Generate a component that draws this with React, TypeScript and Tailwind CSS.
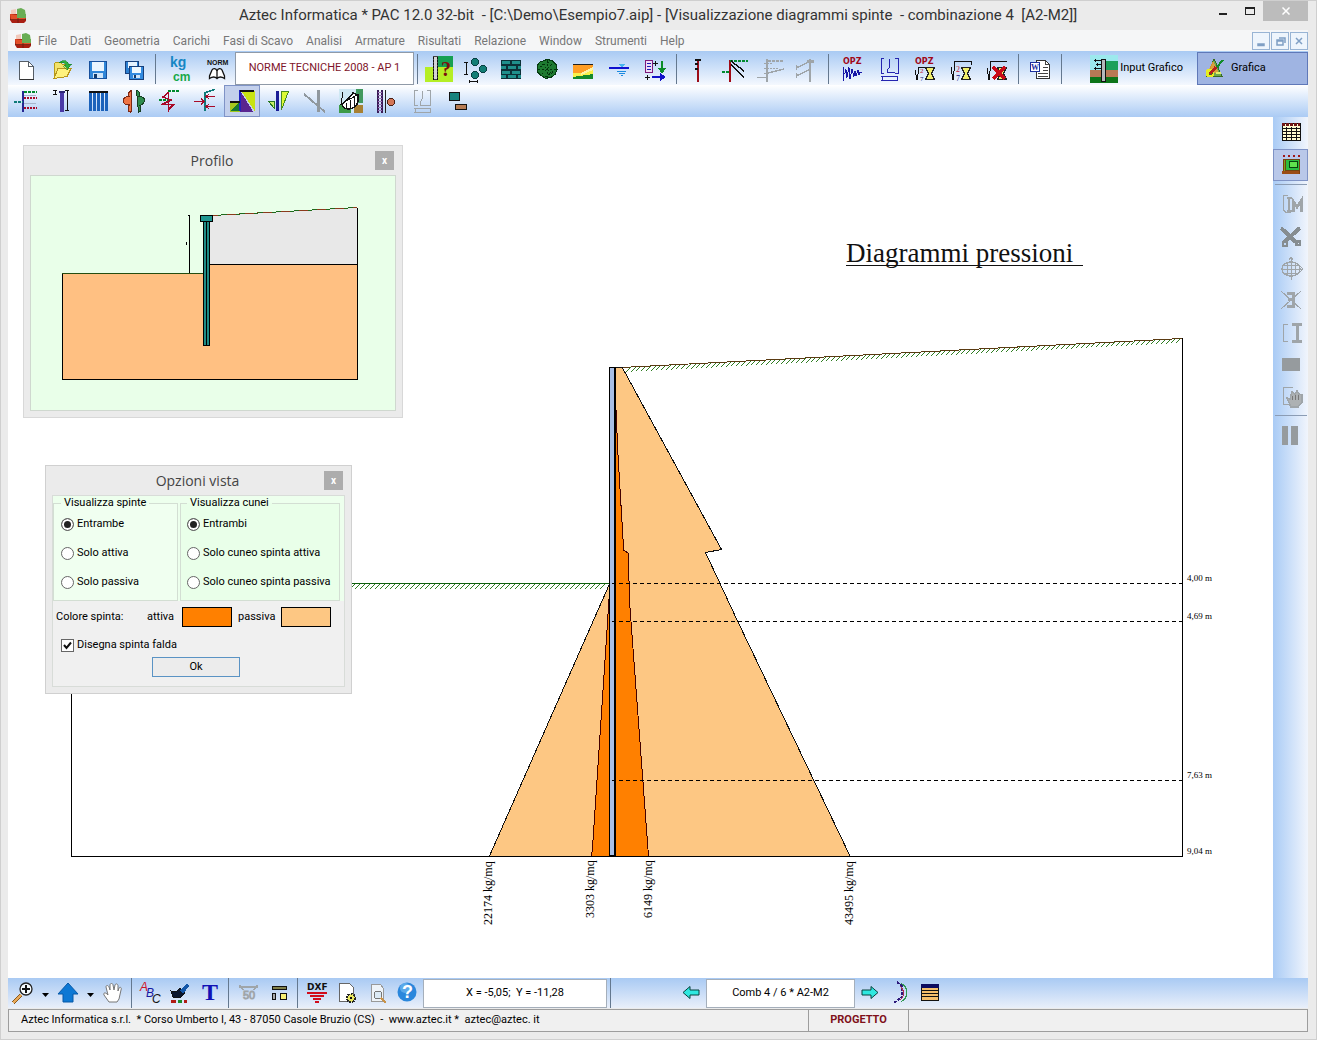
import React from "react";

type Kids = { children: React.ReactNode };

const Ico = ({ children }: Kids) => (
  <svg viewBox="0 0 28 28" className="h-7 w-7 shrink-0" fill="none" shapeRendering="crispEdges" aria-hidden="true">
    {children}
  </svg>
);

const G = "#008a2e";
const R = "#a80a28";
const N = "#15157a";
const T = "#0f7a78";
const A = "#9fa5a9";

const groupA: [string, React.ReactNode][] = [
  ["Nuovo", <>
    <path d="M7.500 6.500h9l5 5v12.500h-14z" fill="#fff" stroke="#555d66" />
    <path d="M16.500 6.500v5h5" stroke="#555d66" />
    <path d="M8 24.500h14" stroke="#333" /></>],
  ["Apri", <>
    <path d="M6 23V9l2-2h4l2 2h5v4" fill="#f3e36a" stroke="#b79a18" />
    <path d="M6 23.500l4-10h13l-4 8z" fill="#fff27d" stroke="#b8961c" />
    <path d="M11 7.500c4-3 9-2 10 2l2.500-.5-4 5.500-4-4 2.500-.5c-1-2-3-2.500-7-2.500z" fill="#2fae3c" stroke="#15802a" strokeWidth=".6" /></>],
  ["Salva", <>
    <rect x="5.500" y="6.500" width="17" height="17" fill="#2f86d8" stroke="#17509c" />
    <rect x="8" y="7" width="12" height="9" fill="#e9f5ff" />
    <rect x="9" y="18" width="10" height="5" fill="#cfe5fa" />
    <rect x="10" y="19" width="3" height="4" fill="#123a6b" /></>],
  ["Salva tutto", <>
    <path d="M5.500 6.500h13v12h-13z" fill="#2b7ed0" stroke="#17407c" />
    <path d="M8 7h9v6H8z" fill="#e6f3ff" />
    <path d="M9.500 11.500h13.500v12.500H9.500z" fill="#338be0" stroke="#17407c" />
    <path d="M12 12h9v6h-9z" fill="#eef8ff" />
    <path d="M13 20h7v3h-7z" fill="#cfe5fa" />
    <path d="M14 20h2v3h-2z" fill="#123a6b" /></>],
];

const groupUnits: [string, React.ReactNode][] = [
  ["Unità di misura", <>
    <text x="3" y="12" fontSize="14" fontWeight="700" fontFamily="Liberation Sans, sans-serif" fill="#1687c4">kg</text>
    <text x="6" y="26" fontSize="12" fontWeight="700" fontFamily="Liberation Sans, sans-serif" fill="#18a848">cm</text></>],
  ["Norme", <>
    <text x="4" y="10" fontSize="7" fontWeight="700" fontFamily="Liberation Sans, sans-serif" fill="#111">NORM</text>
    <path d="M14 23v-7c-1-3-4-3-5-1L6.500 21v2.500c3-2 6-1.500 7.500 0 1.500-1.500 4.500-2 7.500 0V21L19 15c-1-2-4-2-5 1" fill="#fff" stroke="#111" strokeWidth="1.300" shapeRendering="auto" /></>],
];

const groupB: [string, React.ReactNode][] = [
  ["Guida paratia", <>
    <path d="M0 12h28v15H0z" fill="#b5ee25" /><path d="M8 1h20v11H8z" fill="#16a052" />
    <path d="M8.500 1.500h4v23h-4z" fill="#d5d5d5" stroke="#444" /><path d="M8.500 2v23M12.500 2v23" stroke="#111" strokeDasharray="2 1" />
    <text x="16" y="21" fontSize="20" fontWeight="700" fontFamily="Liberation Serif, serif" fill="#7c1010">?</text></>],
  ["Pali", <>
    <path d="M3 7.500h4M5 7.500v12M3 19.500h4M8 26.500h8M8.500 25v3M16.500 25v3" stroke="#111" />
    <g fill="#127d75" stroke="#093f42"><circle cx="14" cy="7" r="3.500" /><circle cx="22" cy="14" r="3.500" /><circle cx="14" cy="20" r="3.500" /></g></>],
  ["Materiali", <>
    <path d="M4 5h20v19H4z" fill="#0c3038" />
    <path d="M5 6h8v3H5zM15 6h8v3h-8zM4 11h5v3H4zM11 11h8v3h-8zM21 11h3v3h-3zM5 16h8v3H5zM15 16h8v3h-8zM4 20h5v3H4zM11 20h8v3h-8zM21 20h3v3h-3z" fill="#1f8f8c" /></>],
  ["Terreni", <>
    <path d="M14 4.500l5 1 4 4 1 5-2 5-4 3-5 1-5-3-4-4V11l3-4z" fill="#1d7a30" stroke="#053a10" />
    <path d="M9 9l10 10M9 19L19 9M14 5v18M5 14h18M7 12l9-5M12 22l9-6" stroke="#02330c" strokeDasharray="2 2" /></>],
  ["Stratigrafia", <>
    <path d="M4 9h20v15H4z" fill="#f8f04a" /><path d="M4 9h20v3L12 18H4z" fill="#ff9d24" /><path d="M4 22l20-3v5H4z" fill="#168a2a" />
    <path d="M12 18l12-6v3l-12 5z" fill="#fff3a5" /><path d="M4 9.500h20" stroke="#222" /></>],
  ["Falda", <>
    <path d="M4 13h20" stroke="#1010cf" strokeWidth="2" /><path d="M13 8.500h8l-4 4z" fill="#48b6ef" />
    <path d="M12 16.500h9M14 18.500h6M16 20.500h2" stroke="#1c8be0" /></>],
  ["Combinazioni", <>
    <path d="M4.500 5.500h7v12h-7z" fill="#efdcf7" stroke="#7c1a7a" /><path d="M6 8.500h4M6 11.500h4M6 14.500h4" stroke="#1b1bb5" />
    <path d="M12 8.500h5M14.500 6v5M4 22.500h5M6.500 20v5" stroke="#111" />
    <path d="M21 6v10M18 13l3 4 3-4" stroke="#0b8c28" strokeWidth="2" /><path d="M11 22h11M19 19l4 3-4 3" stroke="#1111c8" strokeWidth="2" /></>],
];

const groupC: [string, React.ReactNode][] = [
  ["Paratia", <><path d="M14 6v21" stroke="#9c0c18" strokeWidth="2" /><path d="M11 5h6M11 9h3M11 14h3" stroke="#111" strokeWidth="2" /></>],
  ["Tiranti", <><path d="M10 5v22" stroke="#a10a16" strokeWidth="2" /><path d="M10 6h18" stroke={G} strokeWidth="2" strokeDasharray="3 1" /><path d="M2 17h7" stroke={G} strokeWidth="2" strokeDasharray="3 1" /><path d="M11 6l13 10M11 10l13 12" stroke="#111" strokeWidth="1.500" /></>],
  ["Vincoli", <g stroke={A}><path d="M11 4v23" strokeWidth="2" /><path d="M1 22.500h10M12 18l16-4" strokeWidth="1.500" /><path d="M12 6h16" strokeWidth="2" strokeDasharray="3 1" /><path d="M8 8.500h9M8 13.500h14M8 18.500h3" strokeDasharray="2 1" /></g>],
  ["Carichi", <g stroke={A}><path d="M18 4v23" strokeWidth="2" /><path d="M15 6h7" strokeWidth="3" /><path d="M4 13l15-7M4 21l15-7M4.500 10v5M4.500 18v5" strokeWidth="1.500" /></g>],
];

const Opz = () => (
  <text x="4" y="9" fontSize="8" fontWeight="700" fontFamily="DejaVu Sans, sans-serif" fill="#a00718">OPZ</text>
);
const Hourglass = () => (
  <path d="M14.500 12.500h9l-3 6 3 6h-9l3-6z" fill="#f1ef6c" stroke="#222" />
);

const groupD: [string, React.ReactNode][] = [
  ["Opzioni sisma", <><Opz /><path d="M4.500 12v14M4 18.500h2l1-4 1 8 2-10 1 11 2-9 2 7 1-5 1 4 2-5 1 4 1-2h2" stroke="#1717a8" /></>],
  ["Armature", <g stroke="#2525b0"><path d="M9 3.500H6.500v15H9M20 3.500h3v15h-3M14.500 3.500v9l-2 2v3h7M6 21.500h17M7 22v3M22 22v3M6 25.500h17" /></g>],
  ["Opzioni analisi", <><Opz /><path d="M4 15l2 10 2-12.500h15" stroke="#111" /><text x="9" y="18" fontSize="7" fontFamily="Liberation Serif, serif" fill="#c01832">2</text><text x="9" y="26" fontSize="7" fontFamily="Liberation Serif, serif" fill={N}>7</text><Hourglass /></>],
  ["Analisi", <><path d="M4 12l2 13L8 6.500h16V10" stroke="#111" /><text x="9" y="17" fontSize="8" fontFamily="Liberation Serif, serif" fill="#c01832">2</text><text x="9" y="26" fontSize="8" fontFamily="Liberation Serif, serif" fill={N}>7</text><Hourglass /></>],
  ["Annulla analisi", <><path d="M4 13l2 12L8 6.500h16" stroke="#111" /><Hourglass /><path d="M10 12l12 12M22 12L10 24" stroke="#c90a18" strokeWidth="4" /></>],
];

const rowTwo: [string, React.ReactNode][] = [
  ["Spinte", <><path d="M11 4v21" stroke="#272792" strokeWidth="2" /><path d="M12 5h13" stroke={G} strokeWidth="2" strokeDasharray="3 1" /><path d="M12 11h13M12 21h13" stroke={R} strokeWidth="2" strokeDasharray="2 1" /><path d="M12 8.500h12M12 16.500h12" stroke="#a7b5cc" /><path d="M2 15h9" stroke={T} strokeWidth="2" strokeDasharray="3 1" /></>],
  ["Altezza", <><path d="M5 3.500h4M7.500 3.500v4M5 7.500h4M17 3.500h4M19.500 3.500v20M17 23.500h4" stroke="#111" /><path d="M14 5v20" stroke="#4a3aa6" strokeWidth="4" /><path d="M11 5h6" stroke="#2e2774" strokeWidth="2" /></>],
  ["Pannelli", <><path d="M5 5h19" stroke="#111" strokeWidth="2" /><path d="M6.500 6v18M10.500 6v18M14.500 6v18M18.500 6v18M22.500 6v18" stroke="#1b62bb" strokeWidth="3" /></>],
  ["Momenti", <><path d="M11.500 3.500v9c0 4 1 11-1 13-3-1-3-5-1-8-4 1-6-1-6-4s3-4 6-4c-2-2-1-5 2-6z" fill="#ee7445" stroke="#7d2712" /><path d="M16.500 3.500c4 1 4 4 2 6 4 0 6 2 6 4s-2 4-5 5c2 2 2 6-1 7z" fill="#2f8c4f" stroke="#173f21" /></>],
  ["Taglio", <><path d="M12 4h11" stroke={G} strokeWidth="2" strokeDasharray="3 1" /><path d="M12.500 5v20M12 6l-5 4 8 3-8 4 10 1-5 5" stroke={R} strokeWidth="1.500" /><path d="M3 13h9" stroke={G} strokeWidth="2" strokeDasharray="3 1" /></>],
  ["Sforzi", <><path d="M13 5v19M13 5.500l10-3" stroke={T} strokeWidth="1.500" /><path d="M2 14.500h10M9 11.500l3 3-3 3M23 9.500h-9M17 7l-3 2.500 3 2.500M23 19.500h-9M17 17l-3 2.500 3 2.500" stroke={R} /></>],
  ["Diagrammi spinte", <><path d="M13 3.500h14v21z" fill="#c8e312" /><path d="M12 3.500l13 21H12z" fill="#5a2590" /><path d="M2 14.500h10v10H2z" fill="#a4c81e" /><path d="M2 24l10-9v9z" fill="#167a32" /><path d="M12 3v21" stroke="#2024c0" strokeWidth="2" /><path d="M2 14.500h10M12 4h14" stroke="#111" strokeWidth="2" /></>],
  ["Cunei", <><path d="M4.500 14.500h6v7z" fill="#c8ee68" stroke="#287720" /><path d="M13 4v20" stroke="#1a1d96" strokeWidth="3" /><path d="M17.500 4.500h7l-7 18z" fill="#dcfa35" stroke="#498b20" /></>],
  ["Spostamenti", <g stroke="#90989e"><path d="M4 7l21 18" strokeWidth="2" /><path d="M18.500 3v22" strokeWidth="3" /></g>],
  ["Stabilità", <><path d="M3 2h24v24H3z" fill="#cfe8f3" /><path d="M20 2h7v14h-7z" fill="#41995f" /><path d="M18 18h9v8h-9z" fill="#a88032" /><path d="M3 18h12v8H3z" fill="#3d9b49" /><path d="M6 17c0 7 14 7 16-3V8l-5-2-4 5z" fill="#fff" stroke="#111" strokeWidth="1.500" /><path d="M7 5l-2 12 16-9M10 16v6M14 13v9M18 10v11" stroke="#111" /></>],
  ["Sezione palo", <><path d="M6 3v23M10 3v23" stroke="#3a1b58" strokeWidth="2" /><path d="M6 5.500h4M6 8.500h4M6 11.500h4M6 14.500h4M6 17.500h4M6 20.500h4M6 23.500h4" stroke="#9b75b6" /><path d="M13 3v23" stroke="#222" /><circle cx="19" cy="15" r="3.500" fill="#d37657" stroke="#492015" /></>],
  ["Armatura palo", <g stroke={A}><path d="M9.500 3.500h-3v15h3M19 3.500h3v15h-3M14.500 3.500v8l-2 3v4h6M6 21.500h17M7 22v3M22 22v3M6 25.500h17" /></g>],
  ["Cordoli", <><path d="M5.500 5.500h10v8h-10z" fill="#16837e" stroke="#111" /><path d="M11.500 17.500h11v5h-11z" fill="#b67c55" stroke="#111" /></>],
];

const sideIcons: [string, React.ReactNode][] = [
  ["Modifica", <g stroke={A}><path d="M11 5.500H6.500v15l3 2H14" strokeWidth="1.500" /><path d="M12 8v13M10 8h5M10 21h6" strokeWidth="2" /><path d="M16 22V11l4 6 4-6v11" strokeWidth="3" /></g>],
  ["Taglia", <g stroke="#868d91"><path d="M4 6l17 16M23 6L7 20" strokeWidth="4" /><circle cx="8" cy="22" r="2.500" strokeWidth="2" /><circle cx="21" cy="21" r="2.500" strokeWidth="2" /></g>],
  ["Sposta", <g stroke={A}><ellipse cx="14" cy="15" rx="9" ry="7" strokeWidth="1.500" /><path d="M14.500 3v23M4 15.500h22M12 6l2-3 2 3M23 12l3 3-3 3M7 11.500h14M7 19.500h14M10.500 9v12M18.500 9v12" /></g>],
  ["Elimina", <g stroke={A}><path d="M4 5l20 18M24 5L4 23" /><path d="M10 7h6v13h-6M11 13.500h5" strokeWidth="3" /></g>],
  ["Quota", <g stroke={A}><path d="M11 6.500H6.500v17H11" /><path d="M15 6.500h10M15 23.500h10M20.500 6v17" strokeWidth="3" /></g>],
  ["Riempi", <path d="M5 8h18v13H5z" fill="#969b9e" />],
  ["Trascina", <g stroke={A}><path d="M16 5.500H6.500v17H13" /><path d="M10 16l3 1 2-7 3 2 2-3 2 3 3 1v7l-4 5h-7z" fill="#adb1b3" strokeWidth="1.500" /><path d="M15.500 14v4M18.500 13v5M21.500 13v5" stroke="#777" /></g>],
];

const Logo = () => (
  <svg viewBox="0 0 16 16" className="h-4 w-4 shrink-0" aria-hidden="true">
    <path d="M7 1l4-1 4 2 1 7-6 1-3-2z" fill="#69ad54" />
    <path d="M1 2l5-1v5H1z" fill="#f1c9bb" />
    <path d="M0 6h16v7l-2 2H2l-2-3z" fill="#a91f12" />
    <path d="M0 6l7 1 9 3v-1l-1 3H1z" fill="#e35029" />
    <path d="M7 6v4h9V6z" fill="#69ad54" />
    <path d="M0 11.500h16M8 10v5" stroke="#5c180f" strokeWidth=".7" />
  </svg>
);

const ToolBtn = ({ label, children, on = false }: Kids & { label: string; on?: boolean }) => (
  <button
    type="button"
    aria-label={label}
    className={
      on
        ? "flex h-8 w-9 shrink-0 items-center justify-center border border-[#7f93c6] bg-[#c3d0ec]"
        : "flex h-8 w-9 shrink-0 items-center justify-center"
    }
  >
    <Ico>{children}</Ico>
  </button>
);

const SmallBtn = ({ label, children }: Kids & { label: string }) => (
  <button type="button" aria-label={label} className="flex h-7 w-[30px] shrink-0 items-center justify-center">
    <Ico>{children}</Ico>
  </button>
);

const Drop = ({ label }: { label: string }) => (
  <button type="button" aria-label={label} className="flex h-7 w-[15px] shrink-0 items-center justify-center pt-1">
    <svg viewBox="0 0 7 4" className="h-1 w-[7px]" aria-hidden="true"><path d="M0 0h7L3.500 4z" fill="#000" /></svg>
  </button>
);

const Sep = () => <span className="mx-[3px] h-[30px] w-px shrink-0 bg-[#64788f]" />;

const hatch = (x0: number, y0: number, x1: number, y1: number) => {
  let d = "";
  for (let x = x0; x <= x1; x += 5) {
    const y = Math.round(y0 + ((y1 - y0) * (x - x0)) / (x1 - x0));
    d += `M${x} ${y}l-5 5`;
  }
  return d;
};

const depths: [string, number][] = [["4,00 m", 583], ["4,69 m", 621], ["7,63 m", 780], ["9,04 m", 856]];
const loads: [string, number, number][] = [["22174 kg/mq", 492, 925], ["3303 kg/mq", 594, 918], ["6149 kg/mq", 652, 918], ["43495 kg/mq", 853, 925]];

const PressureChart = () => (
  <svg viewBox="8 117 1265 861" preserveAspectRatio="xMinYMin meet" shapeRendering="crispEdges" className="block h-full w-full" role="img" aria-label="Diagrammi pressioni">
    <text x="846" y="262" fontSize="27" fontFamily="Liberation Serif, serif" fill="#111">Diagrammi pressioni</text>
    <path d="M846 265.500h237" stroke="#111" />
    <path d={hatch(631, 367, 1181, 338)} stroke="#2f7d22" />
    <path d={hatch(330, 584, 609, 584)} stroke="#2f7d22" />
    <path d="M621 367.500L1182 338.500" stroke="#5a3a12" />
    <path d="M330 583.500H610" stroke="#0d5f0d" />
    <path d="M609.500 584L489.500 856H610z" fill="#fdc783" stroke="#111" />
    <path d="M609.500 592L605 660 592.500 848 591.500 856H610z" fill="#ff8000" stroke="#400" />
    <path d="M616 367h6L721.500 549.500 705.500 552.500 738 622 850 856H616z" fill="#fdc783" />
    <path d="M616 367h6L721.500 549.500 705.500 552.500 738 622 850 856" fill="none" stroke="#111" />
    <path d="M616 410l2 45 5.500 92v3l4.500 3 2 55 18.500 248H616z" fill="#ff8000" />
    <path d="M616 410l2 45 5.500 92v3l4.500 3 2 55 18.500 248" fill="none" stroke="#400" />
    <path d="M71.500 690V856.500H1182.500V338" stroke="#000" fill="none" />
    <path d="M609 367h7v490h-7z" fill="#000" />
    <path d="M610 368h4v487h-4z" fill="#a9bfe6" />
    <path d="M612 583.500H1182M612 621.500H1182M612 780.500H1182" stroke="#000" strokeDasharray="4 3" />
    <g fontFamily="Liberation Serif, serif" fill="#000">
      {depths.map(([t, y]) => <text key={t} x="1187" y={y - 2} fontSize="9">{t}</text>)}
      {loads.map(([t, x, y]) => <text key={t} transform={`translate(${x} ${y}) rotate(-90)`} fontSize="12">{t}</text>)}
    </g>
  </svg>
);

const ProfileDrawing = () => (
  <svg viewBox="31 176 364 234" shapeRendering="crispEdges" className="block w-full" role="img" aria-label="Profilo paratia">
    <path d="M208 216L357.500 208V264.500H208z" fill="#e8e8e8" />
    <path d="M62.500 273.500H208V264.500H357.500V379.500H62.500z" fill="#ffc082" />
    <path d="M62.500 273.500V379.500H357.500V208M209 264.500H357.500" stroke="#000" fill="none" />
    <path d="M62 273.500H204" stroke="#244d10" />
    <path d="M212 215.500L357.500 207.500" stroke="#8b3a1c" />
    <path d="M218 215.200L357.500 207.500" stroke="#1f6a1c" strokeDasharray="9 9" />
    <path d="M188 215.500h2M189.500 215v58M186.500 242v3" stroke="#000" />
    <path d="M203.500 221.500h6v124h-6z" fill="#1e8b84" stroke="#000" />
    <path d="M206.500 221v124" stroke="#000" />
    <path d="M200.500 215.500h12v6h-12z" fill="#1e9690" stroke="#000" />
  </svg>
);

const Choice = ({ group, label, on = false }: { group: string; label: string; on?: boolean }) => (
  <label className="flex h-[29px] items-center gap-[3px] whitespace-nowrap">
    <input type="radio" name={group} defaultChecked={on} className="h-[13px] w-[13px] shrink-0 appearance-none rounded-full border border-[#666] bg-white checked:bg-[#222] checked:shadow-[inset_0_0_0_2px_white]" />
    {label}
  </label>
);

const FloatTitle = ({ title }: { title: string }) => (
  <header className="grid h-[29px] grid-cols-[1fr_auto_1fr] items-center pr-[2px]">
    <span />
    <h2 className="font-[Open_Sans,sans-serif] text-sm text-[#444]">{title}</h2>
    <button type="button" aria-label={`Chiudi ${title}`} className="flex h-[19px] w-[19px] items-center justify-center justify-self-end bg-[#adadad] text-[10px] font-bold text-white">x</button>
  </header>
);

const menus = ["File", "Dati", "Geometria", "Carichi", "Fasi di Scavo", "Analisi", "Armature", "Risultati", "Relazione", "Window", "Strumenti", "Help"];

export default function App() {
  return (
    <div className="flex min-h-screen flex-col border border-[#cfcfcf] bg-[#ebebeb] pr-2 pb-[7px] pl-[7px] font-[Roboto,sans-serif] text-[11px] text-black">
      <header className="grid h-[29px] grid-cols-[1fr_auto_1fr]">
        <span className="flex items-center pl-[2px]"><Logo /></span>
        <h1 className="self-center whitespace-pre text-[15px] text-[#333]">
          {"Aztec Informatica * PAC 12.0 32-bit  - [C:\\Demo\\Esempio7.aip] - [Visualizzazione diagrammi spinte  - combinazione 4  [A2-M2]]"}
        </h1>
        <div className="flex h-5 justify-self-end">
          <button type="button" aria-label="Riduci" className="flex w-[27px] items-center justify-center"><span className="mt-[5px] h-[2px] w-2 bg-[#222]" /></button>
          <button type="button" aria-label="Ingrandisci" className="flex w-[27px] items-center justify-center"><span className="h-2 w-[10px] border border-t-2 border-[#222]" /></button>
          <button type="button" aria-label="Chiudi" className="flex w-[45px] items-center justify-center bg-[#bcbcbc]">
            <svg viewBox="0 0 8 8" className="h-2 w-2" aria-hidden="true"><path d="M.5.500l7 7M7.500.500l-7 7" stroke="#fff" strokeWidth="1.500" /></svg>
          </button>
        </div>
      </header>

      <nav className="flex h-[21px] items-center bg-[#f5f6f7] pl-[7px] text-xs text-[#777]">
        <Logo />
        <div className="flex flex-1 items-center gap-[13px] pl-[7px]">
          {menus.map((m) => <button key={m} type="button" className="whitespace-nowrap">{m}</button>)}
        </div>
        <div className="flex gap-px text-[#7f9fc4]">
          {["M5 11h6v1.500H5z", "M5 7h6v5H5zM7 5h6v5M5 8h6", "M5 5l6 6M11 5l-6 6"].map((d, i) => (
            <button key={d} type="button" aria-label={["Riduci documento", "Ripristina documento", "Chiudi documento"][i]} className="h-[18px] w-[18px] border border-[#98b4d4] bg-[#eef5fc]">
              <svg viewBox="0 0 16 16" className="h-4 w-4" fill="none" stroke="currentColor" strokeWidth="1.500" aria-hidden="true"><path d={d} /></svg>
            </button>
          ))}
        </div>
      </nav>

      <div role="toolbar" aria-label="Principale" className="flex h-[34px] items-center bg-linear-to-b from-[#a9caf3] to-[#f4f8fe] pt-px">
        {groupA.map(([k, i]) => <ToolBtn key={k} label={k}>{i}</ToolBtn>)}
        <Sep /><span className="w-1" />
        {groupUnits.map(([k, i]) => <ToolBtn key={k} label={k}>{i}</ToolBtn>)}
        <output className="flex h-full w-[179px] shrink-0 items-center justify-center border border-[#8f9aa8] bg-white text-[#80142a]">NORME TECNICHE 2008 - AP 1</output>
        <Sep />
        {groupB.map(([k, i]) => <ToolBtn key={k} label={k}>{i}</ToolBtn>)}
        <Sep />
        {groupC.map(([k, i]) => <ToolBtn key={k} label={k}>{i}</ToolBtn>)}
        <span className="w-px" /><Sep /><span className="w-[3px]" />
        {groupD.map(([k, i]) => <ToolBtn key={k} label={k}>{i}</ToolBtn>)}
        <Sep />
        <ToolBtn label="Word">
          <path d="M10.500 5.500h9l4 4v14h-13z" fill="#fff" stroke="#333" /><path d="M19.500 5.500v4h4M17 12.500h5M17 15.500h5M12 18.500h10M12 21.500h10" stroke="#444" />
          <path d="M4.500 7.500h9v9h-9z" fill="#fff" stroke="#1c2f9e" />
          <text x="5" y="15" fontSize="8" fontWeight="700" fontFamily="Liberation Serif, serif" fill="#1c2f9e">W</text>
        </ToolBtn>
        <Sep />
        <div className="flex flex-1 items-stretch justify-end gap-[14px] self-stretch">
          <button type="button" className="flex items-center gap-[2px] whitespace-nowrap">
            <Ico>
              <path d="M0 0h28v16H0z" fill="#9ce9ed" /><path d="M14 6h14v10H14z" fill="#1ba05a" /><path d="M0 15h28v7H0z" fill="#b87955" /><path d="M0 22h28v6H0z" fill="#0d7519" />
              <path d="M11.500 4.500h4v22h-4z" fill="#b3b9bb" stroke="#111" /><path d="M4 5.500h7M6 9.500h5M4 13.500h7M5.500 4v3M7.500 8v3M5.500 12v3" stroke="#111" />
            </Ico>
            Input Grafico
          </button>
          <button type="button" className="flex w-[111px] items-center gap-[2px] border border-[#5f78b8] bg-[#9fb4e2] pl-[3px]">
            <Ico>
              <path d="M13 4l8 17H6z" fill="#6da850" stroke="#376c21" /><path d="M12 6l6 12H6z" fill="#f39e38" opacity=".8" />
              <circle cx="9" cy="18" r="4.500" fill="#e8ed22" /><path d="M22 5L9 20" stroke="#128b2a" strokeWidth="2" /><path d="M15 12l-6 7" stroke="#b5201c" strokeWidth="3" /><path d="M15 18h5" stroke="#dff26a" strokeWidth="2" />
            </Ico>
            Grafica
          </button>
        </div>
      </div>

      <div role="toolbar" aria-label="Diagrammi" className="flex h-8 items-center bg-linear-to-b from-white to-[#abcbf4]">
        {rowTwo.map(([k, i]) => <ToolBtn key={k} label={k} on={k === "Diagrammi spinte"}>{i}</ToolBtn>)}
      </div>

      <main className="flex flex-1 bg-white">
        <section className="relative h-[861px] min-w-0 flex-1">
          <PressureChart />

          <article className="absolute top-7 left-[15px] w-[380px] border border-[#d8d8d8] bg-[#ebebeb] px-[6px] pb-[6px]">
            <FloatTitle title="Profilo" />
            <div className="border border-[#cfd8cf] bg-[#e9ffe9]"><ProfileDrawing /></div>
          </article>

          <article className="absolute top-[348px] left-[37px] w-[307px] border border-[#d0d0d0] bg-[#ebebeb] px-[6px] pb-[6px]">
            <FloatTitle title="Opzioni vista" />
            <form className="border border-[#d8dcd8] bg-[#f0f0f0] pb-[9px]" onSubmit={(e) => e.preventDefault()}>
              <div className="flex gap-[2px] bg-[#edffed] pr-1">
                <fieldset className="h-[105px] w-[125px] border border-[#d3ded3] bg-[#f0fff0] pl-[7px]">
                  <legend className="px-[3px] leading-[14px]">Visualizza spinte</legend>
                  <Choice group="spinte" label="Entrambe" on />
                  <Choice group="spinte" label="Solo attiva" />
                  <Choice group="spinte" label="Solo passiva" />
                </fieldset>
                <fieldset className="h-[105px] flex-1 border border-[#d3ded3] bg-[#e9ffe9] pl-[6px]">
                  <legend className="px-[3px] leading-[14px]">Visualizza cunei</legend>
                  <Choice group="cunei" label="Entrambi" on />
                  <Choice group="cunei" label="Solo cuneo spinta attiva" />
                  <Choice group="cunei" label="Solo cuneo spinta passiva" />
                </fieldset>
              </div>
              <div className="flex h-8 items-center pl-[3px]">
                <span className="w-[91px]">Colore spinta:</span>
                <span className="w-[35px]">attiva</span>
                <button type="button" aria-label="Colore attiva" className="h-5 w-[50px] border border-black bg-[#ff8000]" />
                <span className="w-[49px] pl-[6px]">passiva</span>
                <button type="button" aria-label="Colore passiva" className="h-5 w-[50px] border border-black bg-[#fdc783]" />
              </div>
              <label className="flex h-6 items-center gap-[3px] pl-2">
                <span className="grid">
                  <input type="checkbox" defaultChecked className="peer col-start-1 row-start-1 h-[13px] w-[13px] appearance-none border border-[#666] bg-white" />
                  <svg viewBox="0 0 13 13" className="pointer-events-none col-start-1 row-start-1 hidden h-[13px] w-[13px] peer-checked:block" aria-hidden="true"><path d="M3 6l2.500 3L10 3.500" fill="none" stroke="#111" strokeWidth="2" /></svg>
                </span>
                Disegna spinta falda
              </label>
              <button type="submit" className="ml-[99px] block h-5 w-[88px] border border-[#5a93c4] bg-[#ececec]">Ok</button>
            </form>
          </article>
        </section>

        <aside role="toolbar" aria-label="Strumenti grafici" className="flex w-[35px] flex-col items-center bg-linear-to-r from-[#a9cbf5] to-[#f1f5fc]">
          <button type="button" aria-label="Tabella" className="flex h-8 items-center justify-center">
            <Ico><path d="M5.500 4.500h18v17h-18z" fill="#fffbd0" stroke="#111" /><path d="M5 5.500h18" stroke="#701515" strokeWidth="3" strokeDasharray="3 1" /><path d="M6 9.500h17M6 12.500h17M6 15.500h17M6 18.500h17M9.500 8v14M14.500 8v14M19.500 8v14" stroke="#111" /></Ico>
          </button>
          <button type="button" aria-label="Vista" className="flex h-8 w-full items-center justify-center border border-[#7f93c6] bg-[#b9c8e9]">
            <Ico><path d="M6 8h16v14H6z" fill="#77a820" stroke="#7d3d0c" /><path d="M8 8h14v11H8z" fill="#2bbe40" stroke="#704510" /><path d="M12 10h8v6h-8z" fill="#60e34e" stroke="#064410" /><path d="M5 21h17" stroke="#9b4c14" strokeWidth="3" /><path d="M6 5h17" stroke="#a01818" strokeWidth="2" strokeDasharray="2 3" /></Ico>
          </button>
          <span className="my-[3px] h-px w-8 bg-[#8b9cb4]" />
          {sideIcons.map(([k, i]) => (
            <button key={k} type="button" aria-label={k} className="flex h-8 items-center justify-center"><Ico>{i}</Ico></button>
          ))}
          <span className="my-[3px] h-px w-8 bg-[#8b9cb4]" />
          <button type="button" aria-label="Colonne" className="flex h-8 items-center justify-center"><Ico><path d="M5 5h6v19H5zM14 5h7v19h-7z" fill="#969b9e" /></Ico></button>
        </aside>
      </main>

      <div role="toolbar" aria-label="Vista" className="flex h-[30px] items-center bg-linear-to-b from-[#a9caf3] to-[#e9effa]">
        <SmallBtn label="Zoom"><path d="M12 16l-8 8" stroke="#8a5a1c" strokeWidth="4" /><path d="M12 16l-8 8" stroke="#e8a95a" strokeWidth="2" /><circle cx="17" cy="10" r="6" fill="#f5fbff" stroke="#222" strokeWidth="1.300" shapeRendering="auto" /><path d="M13 10h8M17 6v8" stroke="#111" strokeWidth="2" /></SmallBtn>
        <Drop label="Opzioni zoom" />
        <SmallBtn label="Su"><path d="M14 4l10 11h-5v8H9v-8H4z" fill="#0d78d4" stroke="#0759a8" shapeRendering="auto" /></SmallBtn>
        <Drop label="Opzioni direzione" />
        <SmallBtn label="Mano"><path d="M10 23l-5-7c-1-2 1-3 3-1l1 1-2-8c0-2 2-2 3 0l1 3V6c0-2 3-2 3 0l1 5 1-5c1-2 3-1 3 1v5l1-3c1-1 3-1 2 2l-2 9-2 3z" fill="#fff" stroke="#777" shapeRendering="auto" /></SmallBtn>
        <Sep />
        <SmallBtn label="Testo ABC">
          <g fontSize="12" fontStyle="italic" fontFamily="Liberation Sans, sans-serif"><text x="4" y="12" fill="#cf1326">A</text><text x="10" y="18" fill="#1818a0">B</text><text x="16" y="24" fill="#111">C</text></g>
        </SmallBtn>
        <SmallBtn label="Pennello"><path d="M5 12l5 1 4-4 5 5-5 5-7-1z" fill="#0a152c" stroke="#111" /><path d="M14 11l7-6 2 2-6 8z" fill="#1457a8" /><path d="M5 21h5v3H5z" fill="#b11c15" /><path d="M12 21h4v3h-4z" fill="#1a8d2c" /><path d="M18 21h3v3h-3z" fill="#b01c15" /></SmallBtn>
        <SmallBtn label="Testo"><text x="6" y="21" fontSize="24" fontWeight="700" fontFamily="Liberation Serif, serif" fill="#1111b5">T</text></SmallBtn>
        <Sep /><span className="w-[2px]" />
        <SmallBtn label="Scala 50"><path d="M4 8h19M5 6l3 5M22 6l-3 5" stroke={A} strokeWidth="2" /><text x="8" y="20" fontSize="11" fontFamily="Liberation Sans, sans-serif" fill="#fff" stroke={A}>50</text></SmallBtn>
        <SmallBtn label="Blocchi"><path d="M7.500 7.500h14v3h-14z" fill="#81814b" stroke="#111" /><path d="M7.500 14.500h3v6h-3z" fill="#aaa" stroke="#111" /><path d="M15.500 14.500h6v6h-6z" fill="#f6ee74" stroke="#111" /></SmallBtn>
        <Sep /><span className="w-px" />
        <SmallBtn label="DXF"><text x="4" y="11" fontSize="9" fontWeight="700" fontFamily="DejaVu Sans, sans-serif" fill="#111">DXF</text><path d="M4 14h20M7 17h14M10 20h8M12 23h4" stroke="#d00c1c" strokeWidth="2" /></SmallBtn>
        <SmallBtn label="Documento"><path d="M6.500 4.500h10l4 4v14h-14z" fill="#fff" stroke="#666" /><circle cx="18" cy="19" r="4" fill="#e9e75f" stroke="#222" strokeWidth="2" strokeDasharray="2 1" /><circle cx="18" cy="19" r="1" fill="#111" /></SmallBtn>
        <SmallBtn label="Anteprima"><path d="M8.500 5.500h9l3 4v13h-12z" fill="#eef3f8" stroke="#999" /><circle cx="15" cy="16" r="4" fill="#dceaf5" stroke="#777" /><path d="M18 19l5 5" stroke="#c8924a" strokeWidth="2" /></SmallBtn>
        <SmallBtn label="Aiuto"><g shapeRendering="auto"><circle cx="14" cy="13" r="9.500" fill="#2a87dc" /><circle cx="12" cy="9" r="5" fill="#7cc0f4" opacity=".6" /></g><text x="9" y="19" fontSize="18" fontWeight="700" fontFamily="Liberation Sans, sans-serif" fill="#fff">?</text></SmallBtn>
        <output className="ml-px flex h-[29px] w-[184px] shrink-0 items-center justify-center border border-[#a5afbb] bg-white whitespace-pre">{"X = -5,05;  Y = -11,28"}</output>
        <Sep />
        <div className="flex items-center pl-[62px]">
          <SmallBtn label="Precedente"><path d="M6 13.500l7-6v3.500h9v5h-9v3.500z" fill="#2ee8e0" stroke="#08433f" shapeRendering="auto" /></SmallBtn>
          <output className="flex h-[29px] w-[149px] shrink-0 items-center justify-center border border-[#a5afbb] bg-white">Comb 4 / 6 * A2-M2</output>
          <SmallBtn label="Successiva"><path d="M22 13.500l-7-6v3.500H6v5h9v3.500z" fill="#2ee8e0" stroke="#08433f" shapeRendering="auto" /></SmallBtn>
          <SmallBtn label="Curve"><path d="M11 3l5 4v11l-8 6" stroke="#2d1a7c" strokeWidth="2" strokeDasharray="3 1" /><path d="M15 4c8 5 8 14 0 19" stroke="#2f9950" /><path d="M14 7c5 5 5 10 0 14" stroke="#a42b55" /></SmallBtn>
          <SmallBtn label="Elenco"><path d="M5.500 5.500h17v16h-17z" fill="#f4bf6b" stroke="#111" /><path d="M5 7h18" stroke="#0d0d60" strokeWidth="4" /><path d="M6 11.500h16M6 14.500h16M6 17.500h16" stroke="#111" /></SmallBtn>
        </div>
      </div>

      <footer className="mt-px flex h-[23px] items-stretch border border-[#9d9d9d] bg-[#f0f0f0]">
        <p className="flex w-[799px] items-center pl-3 whitespace-pre">{"Aztec Informatica s.r.l.  * Corso Umberto I, 43 - 87050 Casole Bruzio (CS)  -  www.aztec.it *  aztec@aztec. it"}</p>
        <p className="flex w-[101px] items-center justify-center border-x border-[#9d9d9d] font-bold text-[#80101a]">PROGETTO</p>
      </footer>
    </div>
  );
}
